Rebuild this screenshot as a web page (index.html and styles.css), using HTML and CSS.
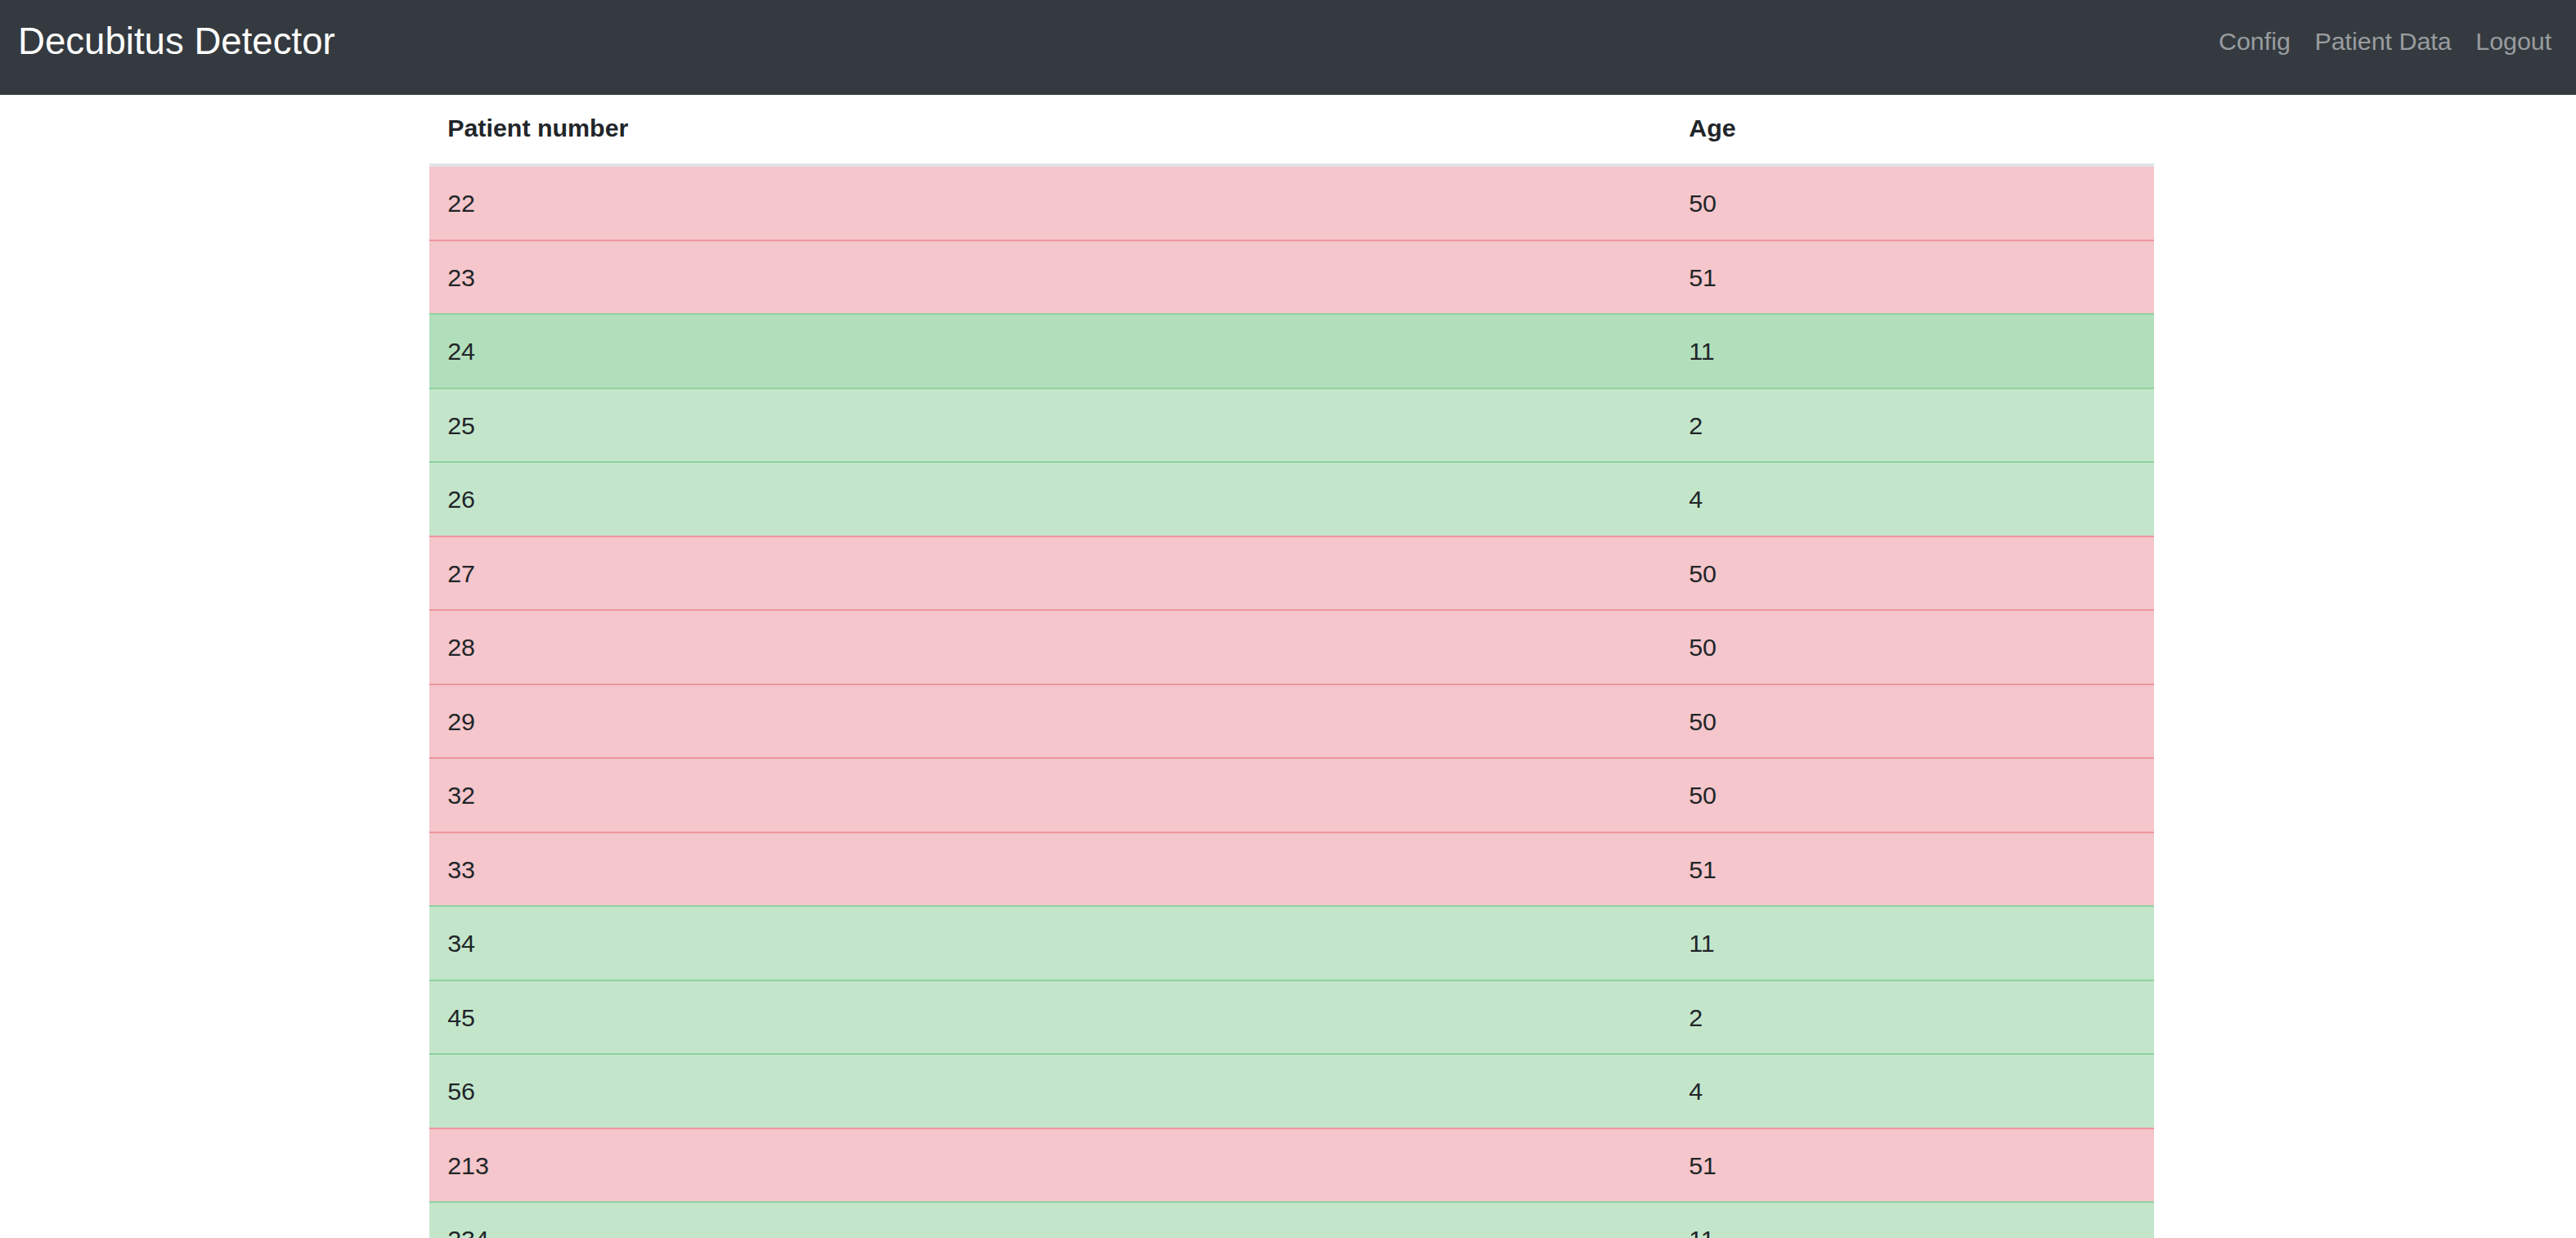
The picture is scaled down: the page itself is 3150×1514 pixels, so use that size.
FILE: index.html
```html
<!DOCTYPE html>
<html lang="en">
<head>
<meta charset="utf-8">
<title>Decubitus Detector</title>
<link rel="stylesheet" href="styles.css">
</head>
<body>
<nav class="navbar">
  <a class="brand" href="#">Decubitus Detector</a>
  <ul class="nav">
    <li><a class="nav-link" href="#">Config</a></li>
    <li><a class="nav-link" href="#">Patient Data</a></li>
    <li><a class="nav-link" href="#">Logout</a></li>
  </ul>
</nav>
<main class="content">
  <table class="patients">
    <colgroup>
      <col class="col-number">
      <col class="col-age">
    </colgroup>
    <thead>
      <tr><th>Patient number</th><th>Age</th></tr>
    </thead>
    <tbody>
      <tr class="row-danger"><td>22</td><td>50</td></tr>
      <tr class="row-danger"><td>23</td><td>51</td></tr>
      <tr class="row-success row-hover"><td>24</td><td>11</td></tr>
      <tr class="row-success"><td>25</td><td>2</td></tr>
      <tr class="row-success"><td>26</td><td>4</td></tr>
      <tr class="row-danger"><td>27</td><td>50</td></tr>
      <tr class="row-danger"><td>28</td><td>50</td></tr>
      <tr class="row-danger"><td>29</td><td>50</td></tr>
      <tr class="row-danger"><td>32</td><td>50</td></tr>
      <tr class="row-danger"><td>33</td><td>51</td></tr>
      <tr class="row-success"><td>34</td><td>11</td></tr>
      <tr class="row-success"><td>45</td><td>2</td></tr>
      <tr class="row-success"><td>56</td><td>4</td></tr>
      <tr class="row-danger"><td>213</td><td>51</td></tr>
      <tr class="row-success"><td>234</td><td>11</td></tr>
      <tr class="row-success"><td>235</td><td>2</td></tr>
    </tbody>
  </table>
</main>
</body>
</html>
```
FILE: styles.css
```css
html, body {
  margin: 0;
  padding: 0;
  background: #ffffff;
}

body {
  font-family: "Liberation Sans", Arial, sans-serif;
  color: #212529;
  font-size: 30.4px;
  line-height: 44.4px;
}

.navbar {
  box-sizing: border-box;
  height: 116px;
  background: #343a40;
  display: flex;
  justify-content: space-between;
  align-items: center;
  padding: 0 15px 16px 22px;
}

.brand {
  color: #ffffff;
  text-decoration: none;
  font-size: 45.6px;
  line-height: 66.6px;
  margin-top: 3px;
}

.nav {
  list-style: none;
  margin: 0;
  padding: 0;
  display: flex;
}

.nav-link {
  display: block;
  padding: 0 14.8px;
  color: rgba(255, 255, 255, 0.5);
  text-decoration: none;
  font-size: 30.4px;
  line-height: 44.4px;
}

.content {
  width: 2109px;
  margin-left: calc(50% - 1050px);
}

.patients {
  width: 100%;
  table-layout: fixed;
  border-collapse: collapse;
}

.col-number {
  width: 1518px;
}

.patients th,
.patients td {
  text-align: left;
  vertical-align: top;
  padding: 22.05px 22.2px;
}

.patients th {
  font-weight: bold;
  padding-top: 17.6px;
  padding-bottom: 22.2px;
  border-bottom: 4px solid #dee2e6;
}

.patients td {
  border-top: 2px solid #dee2e6;
}

.patients tbody tr:first-child td {
  border-top: none;
}

.row-danger td {
  background: #f5c6cb;
  border-top-color: #ed969e;
}

.row-success td {
  background: #c3e6cb;
  border-top-color: #8fd19e;
}

.row-success.row-hover td {
  background: #b1dfbb;
}
```
